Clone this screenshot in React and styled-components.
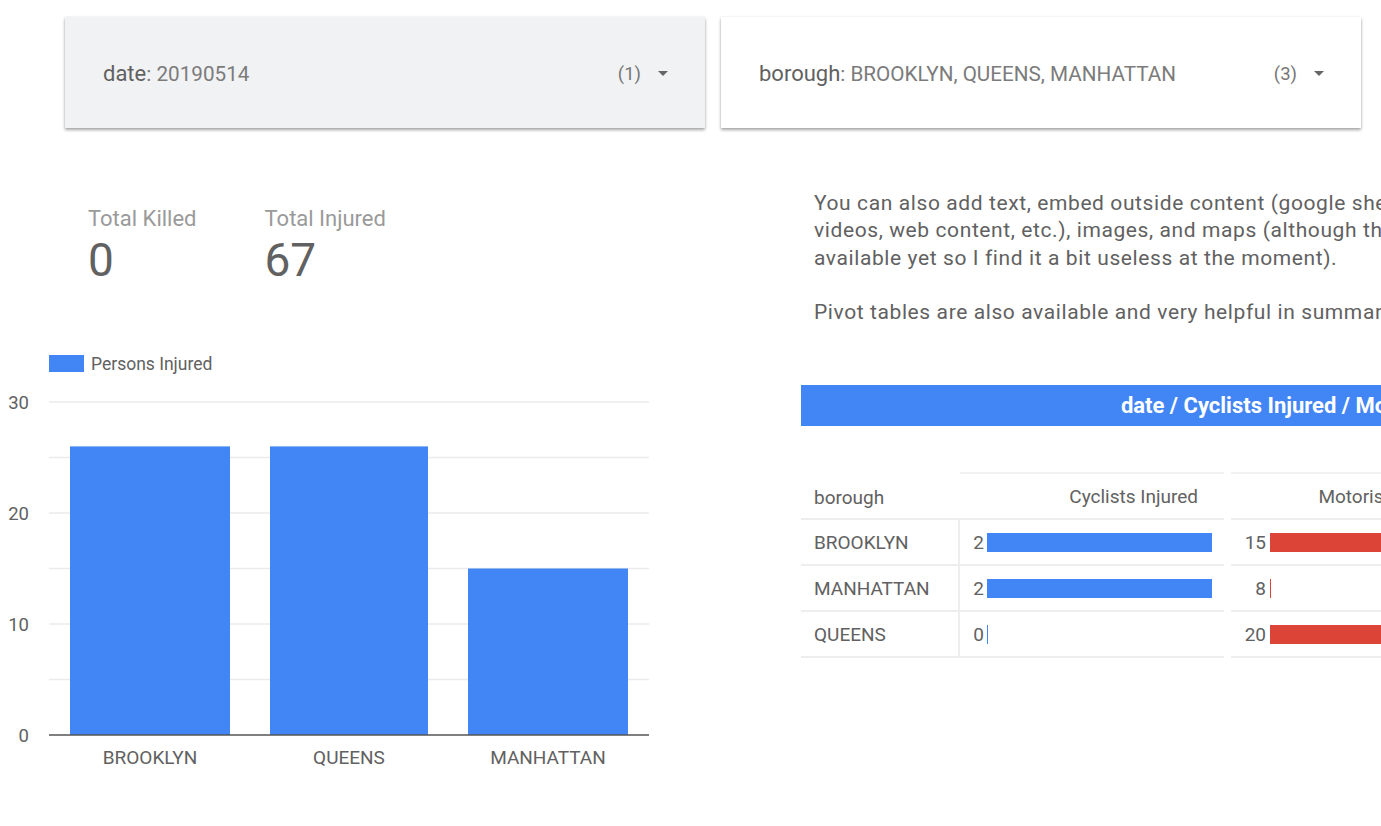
import React from "react";
import styled, { createGlobalStyle } from "styled-components";

const GlobalStyle = createGlobalStyle`
  html, body {
    margin: 0;
    padding: 0;
    background: #ffffff;
    overflow: hidden;
  }
  body {
    width: 1381px;
    height: 826px;
    font-family: Roboto, "Noto Sans", sans-serif;
    color: #616161;
  }
`;

const Page = styled.div`
  padding-top: 17px;
  width: 1381px;
  overflow: hidden;
`;

const FilterRow = styled.div`
  display: flex;
  gap: 16px;
  padding-left: 65px;
`;

const FilterCard = styled.div`
  flex: 0 0 640px;
  height: 111px;
  box-sizing: border-box;
  display: flex;
  align-items: center;
  padding: 2px 37px 0 38px;
  background: ${(p) => (p.active ? "#f1f2f4" : "#ffffff")};
  box-shadow: 0 2px 3px rgba(0, 0, 0, 0.35), 0 0 2px rgba(0, 0, 0, 0.08);
`;

const FilterLabel = styled.span`
  flex: 1;
  font-size: 22px;
  color: #616161;
  white-space: nowrap;
`;

const FilterValue = styled.span`
  font-size: 20.7px;
  color: #7b7b7b;
`;

const Count = styled.span`
  font-size: 18.5px;
  color: #777;
  margin-right: 17px;
`;

const Caret = styled.span`
  width: 0;
  height: 0;
  border-left: 5px solid transparent;
  border-right: 5px solid transparent;
  border-top: 5px solid #666;
`;

const Main = styled.div`
  display: flex;
`;

const LeftColumn = styled.div`
  flex: 0 0 801px;
  padding-top: 78px;
`;

const Stats = styled.div`
  display: flex;
  gap: 68px;
  padding-left: 88px;
`;

const Stat = styled.div`
  display: flex;
  flex-direction: column;
`;

const StatLabel = styled.span`
  font-size: 22px;
  line-height: 26px;
  color: #9a9a9a;
`;

const StatValue = styled.span`
  font-size: 46px;
  line-height: 48px;
  margin-top: 4px;
  color: #616161;
`;

const ChartSvg = styled.svg`
  display: block;
  margin-top: 60px;
  font-family: Roboto, "Noto Sans", sans-serif;
`;

const RightColumn = styled.div`
  flex: 0 0 1100px;
  padding-top: 62px;
`;

const Copy = styled.p`
  margin: 0 0 0 13px;
  font-size: 21px;
  line-height: 27.3px;
  letter-spacing: 0.6px;
  color: #616161;
  white-space: nowrap;
`;

const PivotTitle = styled.div`
  margin-top: 59px;
  height: 41px;
  width: 1044px;
  background: #4285f4;
  color: #ffffff;
  font-weight: 700;
  font-size: 22px;
  display: flex;
  align-items: center;
  justify-content: center;
  white-space: nowrap;
`;

const PivotGrid = styled.div`
  margin-top: 46px;
  display: grid;
  grid-template-columns: 159px 264px 264px;
`;

const HeadCell = styled.div`
  height: 48px;
  box-sizing: border-box;
  display: flex;
  align-items: center;
  justify-content: ${(p) => (p.right ? "flex-end" : "flex-start")};
  padding: ${(p) => (p.first ? "4px 0 0 13px" : "0 26px 0 0")};
  margin-left: ${(p) => (p.gap ? "7px" : "0")};
  border-top: ${(p) => (p.first ? "none" : "2px solid #f1f1f1")};
  border-bottom: 2px solid #eeeeee;
  font-size: 19px;
  color: #616161;
  white-space: nowrap;
`;

const RowLabel = styled.div`
  height: 46px;
  box-sizing: border-box;
  display: flex;
  align-items: center;
  padding-left: 13px;
  border-bottom: 2px solid #eeeeee;
  border-right: 2px solid #eeeeee;
  font-size: 19px;
  color: #616161;
`;

const BarCell = styled.div`
  height: 46px;
  box-sizing: border-box;
  display: flex;
  align-items: center;
  padding-left: ${(p) => p.pad}px;
  margin-left: ${(p) => (p.gap ? "7px" : "0")};
  border-bottom: 2px solid #eeeeee;
  font-size: 19px;
  color: #616161;
  overflow: hidden;
`;

const CellNumber = styled.span`
  flex: 0 0 ${(p) => p.w}px;
  text-align: right;
`;

const Bar = styled.span`
  flex: 0 0 auto;
  height: 19px;
  margin-left: ${(p) => p.gap}px;
  background: ${(p) => p.color};
`;

const rows = [
  { borough: "BROOKLYN", cyclists: 2, motorists: 15 },
  { borough: "MANHATTAN", cyclists: 2, motorists: 8 },
  { borough: "QUEENS", cyclists: 0, motorists: 20 },
];

const barWidth = (v, min, max, full) =>
  Math.max(1, ((v - min) / (max - min)) * full);

const chartBars = [
  { label: "BROOKLYN", value: 26, x: 70, w: 160 },
  { label: "QUEENS", value: 26, x: 270, w: 158 },
  { label: "MANHATTAN", value: 15, x: 468, w: 160 },
];

const BASE = 391;
const UNIT = 11.1;

const BarChart = () => (
  <ChartSvg width="660" height="430" viewBox="0 0 660 430">
    <rect x="49" y="11" width="35" height="17" fill="#4285f4" />
    <text x="91" y="25.5" fontSize="17.5" fill="#616161">Persons Injured</text>
    {[5, 10, 15, 20, 25, 30].map((v) => (
      <line key={v} x1="49" x2="649" y1={BASE - v * UNIT} y2={BASE - v * UNIT} stroke="#ebebeb" strokeWidth="1.5" />
    ))}
    {[0, 10, 20, 30].map((v) => (
      <text key={v} x="29" y={BASE - v * UNIT + 6.5} fontSize="18.5" fill="#616161" textAnchor="end">{v}</text>
    ))}
    {chartBars.map((b) => (
      <rect key={b.label} x={b.x} y={BASE - b.value * UNIT} width={b.w} height={b.value * UNIT} fill="#4285f4" />
    ))}
    <line x1="49" x2="649" y1={BASE} y2={BASE} stroke="#555" strokeWidth="1.5" />
    {chartBars.map((b) => (
      <text key={b.label} x={b.x + b.w / 2} y="419.5" fontSize="19" fill="#616161" textAnchor="middle">{b.label}</text>
    ))}
  </ChartSvg>
);

export default function App() {
  return (
    <Page>
      <GlobalStyle />
      <FilterRow>
        <FilterCard active>
          <FilterLabel>date<FilterValue>: 20190514</FilterValue></FilterLabel>
          <Count>(1)</Count>
          <Caret />
        </FilterCard>
        <FilterCard>
          <FilterLabel>borough<FilterValue>: BROOKLYN, QUEENS, MANHATTAN</FilterValue></FilterLabel>
          <Count>(3)</Count>
          <Caret />
        </FilterCard>
      </FilterRow>
      <Main>
        <LeftColumn>
          <Stats>
            <Stat>
              <StatLabel>Total Killed</StatLabel>
              <StatValue>0</StatValue>
            </Stat>
            <Stat>
              <StatLabel>Total Injured</StatLabel>
              <StatValue>67</StatValue>
            </Stat>
          </Stats>
          <BarChart />
        </LeftColumn>
        <RightColumn>
          <Copy>
            You can also add text, embed outside content (google sheets, youtube
            <br />
            videos, web content, etc.), images, and maps (although the map feature isn't
            <br />
            available yet so I find it a bit useless at the moment).
            <br />
            <br />
            Pivot tables are also available and very helpful in summarizing data.
          </Copy>
          <PivotTitle>date / Cyclists Injured / Motorists Injured</PivotTitle>
          <PivotGrid>
            <HeadCell first>borough</HeadCell>
            <HeadCell right>Cyclists Injured</HeadCell>
            <HeadCell right gap>Motorists Injured</HeadCell>
            {rows.map((r) => (
              <React.Fragment key={r.borough}>
                <RowLabel>{r.borough}</RowLabel>
                <BarCell pad={13}>
                  <CellNumber w={11}>{r.cyclists}</CellNumber>
                  <Bar gap={3} color="#4285f4" style={{ width: barWidth(r.cyclists, 0, 2, 225) }} />
                </BarCell>
                <BarCell pad={12} gap>
                  <CellNumber w={23}>{r.motorists}</CellNumber>
                  <Bar gap={4} color="#db4437" style={{ width: barWidth(r.motorists, 8, 20, 200) }} />
                </BarCell>
              </React.Fragment>
            ))}
          </PivotGrid>
        </RightColumn>
      </Main>
    </Page>
  );
}
